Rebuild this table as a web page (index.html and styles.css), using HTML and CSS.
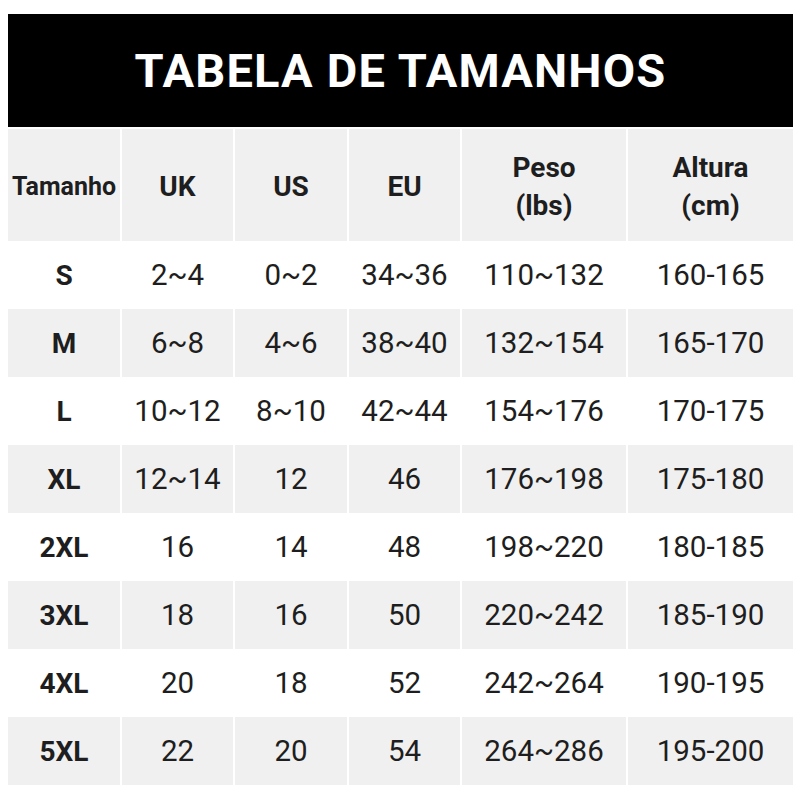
FILE: index.html
```html
<!DOCTYPE html>
<html lang="pt">
<head>
<meta charset="utf-8">
<title>Tabela de Tamanhos</title>
<link rel="stylesheet" href="styles.css">
</head>
<body>
<div class="chart">
  <div class="title">TABELA DE TAMANHOS</div>
  <div class="grid">
    <div class="cell head small">Tamanho</div>
    <div class="cell head">UK</div>
    <div class="cell head">US</div>
    <div class="cell head">EU</div>
    <div class="cell head">Peso<br>(lbs)</div>
    <div class="cell head">Altura<br>(cm)</div>

    <div class="cell lab">S</div><div class="cell">2~4</div><div class="cell">0~2</div><div class="cell">34~36</div><div class="cell">110~132</div><div class="cell">160-165</div>
    <div class="cell lab g">M</div><div class="cell g">6~8</div><div class="cell g">4~6</div><div class="cell g">38~40</div><div class="cell g">132~154</div><div class="cell g">165-170</div>
    <div class="cell lab">L</div><div class="cell">10~12</div><div class="cell">8~10</div><div class="cell">42~44</div><div class="cell">154~176</div><div class="cell">170-175</div>
    <div class="cell lab g">XL</div><div class="cell g">12~14</div><div class="cell g">12</div><div class="cell g">46</div><div class="cell g">176~198</div><div class="cell g">175-180</div>
    <div class="cell lab">2XL</div><div class="cell">16</div><div class="cell">14</div><div class="cell">48</div><div class="cell">198~220</div><div class="cell">180-185</div>
    <div class="cell lab g">3XL</div><div class="cell g">18</div><div class="cell g">16</div><div class="cell g">50</div><div class="cell g">220~242</div><div class="cell g">185-190</div>
    <div class="cell lab">4XL</div><div class="cell">20</div><div class="cell">18</div><div class="cell">52</div><div class="cell">242~264</div><div class="cell">190-195</div>
    <div class="cell lab g">5XL</div><div class="cell g">22</div><div class="cell g">20</div><div class="cell g">54</div><div class="cell g">264~286</div><div class="cell g">195-200</div>
  </div>
</div>
</body>
</html>
```

FILE: styles.css
```css
html, body {
  margin: 0;
  padding: 0;
  background: #ffffff;
}

.chart {
  width: 785px;
  margin: 14px 0 0 8px;
  font-family: Roboto, "Liberation Sans", sans-serif;
  color: #1e1e20;
}

.title {
  height: 113px;
  background: #000000;
  color: #ffffff;
  display: flex;
  align-items: center;
  justify-content: center;
  font-weight: 700;
  font-size: 47px;
  letter-spacing: 1.2px;
  margin-bottom: 2px;
}

.grid {
  display: grid;
  grid-template-columns: 112px 111px 112px 111px 164px 165px;
  grid-template-rows: 112px repeat(8, 68px);
  column-gap: 2px;
}

.cell {
  display: flex;
  align-items: center;
  justify-content: center;
  text-align: center;
  font-size: 29.5px;
  font-weight: 400;
  background: #ffffff;
}

.cell.g,
.cell.head {
  background: #f0f0f0;
}

.head {
  font-size: 28px;
  font-weight: 700;
  line-height: 38px;
  padding-top: 4px;
  box-sizing: border-box;
}

.head.small {
  font-size: 25px;
}

.lab {
  font-size: 28px;
  font-weight: 700;
}
```
